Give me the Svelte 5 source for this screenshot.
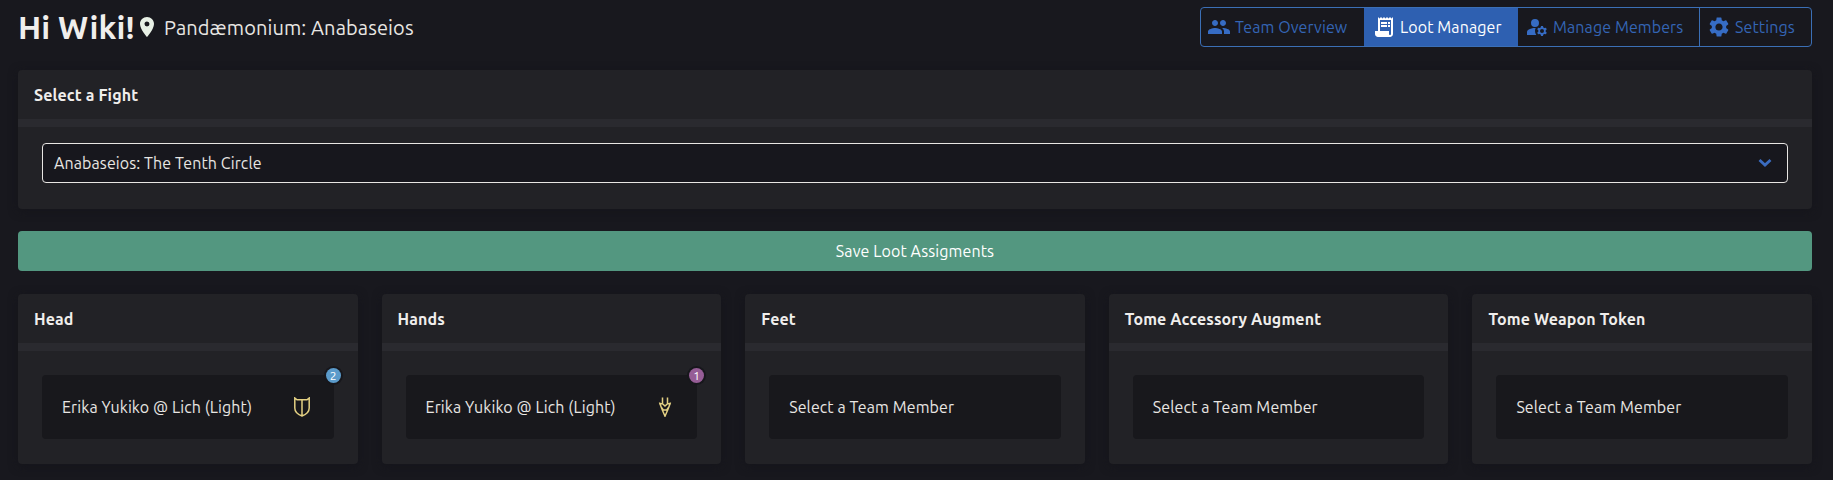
<script>
  const tabs = [
    { label: 'Team Overview', icon: 'group', cls: 'overview' },
    { label: 'Loot Manager', icon: 'receipt', cls: 'loot', active: true },
    { label: 'Manage Members', icon: 'manage', cls: 'members' },
    { label: 'Settings', icon: 'settings', cls: 'settings' }
  ];

  const paths = {
    group: 'M16 11c1.66 0 2.99-1.34 2.99-3S17.66 5 16 5s-3 1.34-3 3 1.34 3 3 3zm-8 0c1.66 0 2.99-1.34 2.99-3S9.66 5 8 5 5 6.34 5 8s1.34 3 3 3zm0 2c-2.33 0-7 1.17-7 3.5V19h14v-2.5c0-2.33-4.67-3.5-7-3.5zm8 0c-.29 0-.62.02-.97.05 1.16.84 1.97 1.97 1.97 3.45V19h6v-2.5c0-2.33-4.67-3.5-7-3.5z',
    receipt: 'M19.5 3.5L18 2l-1.5 1.5L15 2l-1.5 1.5L12 2l-1.500 1.500L9 2 7.500 3.500 6 2v14H3v3c0 1.660 1.340 3 3 3h12c1.660 0 3-1.340 3-3V2l-1.500 1.500zM19 19c0 .55-.45 1-1 1s-1-.45-1-1v-3H8V5h11v14zM9 7h6v2H9zm7 0h2v2h-2zM9 10h6v2H9zm7 0h2v2h-2z',
    manage: 'M10 4a4 4 0 1 0 0 8 4 4 0 0 0 0-8zM10.670 13.020C10.450 13.010 10.230 13 10 13c-2.420 0-4.680.67-6.610 1.820C2.510 15.340 2 16.320 2 17.350V20h9.260A6.960 6.960 0 0 1 10 16c0-1.070.25-2.070.67-2.980zM20.750 16c0-.22-.03-.42-.06-.63l1.140-1.010-1-1.730-1.450.49c-.32-.27-.68-.48-1.080-.63L18 11h-2l-.3 1.490c-.4.15-.76.36-1.080.63l-1.450-.49-1 1.730 1.140 1.010c-.03.21-.06.41-.06.63s.03.42.06.63l-1.140 1.010 1 1.730 1.450-.49c.32.27.68.48 1.080.63L16 21h2l.3-1.490c.4-.15.76-.36 1.080-.63l1.450.49 1-1.730-1.140-1.010c.03-.21.06-.41.06-.63zM17 18a2 2 0 1 1 0-4 2 2 0 0 1 0 4z',
    settings: 'M19.140 12.940c.04-.3.06-.61.06-.94 0-.32-.02-.64-.07-.94l2.030-1.580a.49.49 0 0 0 .12-.61l-1.920-3.320a.488.488 0 0 0-.59-.22l-2.390.96c-.5-.38-1.030-.7-1.620-.94l-.36-2.540a.484.484 0 0 0-.48-.41h-3.840c-.24 0-.43.17-.47.41l-.36 2.540c-.59.24-1.130.57-1.620.94l-2.390-.96c-.22-.08-.47 0-.59.22L2.740 8.870c-.12.21-.08.47.12.61l2.030 1.580c-.05.3-.09.63-.09.94s.02.64.07.94l-2.030 1.580a.49.49 0 0 0-.12.61l1.920 3.320c.12.22.37.29.59.22l2.390-.96c.5.38 1.030.7 1.620.94l.36 2.540c.05.24.24.41.48.41h3.840c.24 0 .44-.17.47-.41l.36-2.540c.59-.24 1.130-.56 1.620-.94l2.390.96c.22.08.47 0 .59-.22l1.920-3.320c.12-.22.07-.47-.12-.61l-2.010-1.580zM12 15.600A3.610 3.610 0 0 1 8.400 12c0-1.980 1.620-3.600 3.600-3.600s3.600 1.620 3.600 3.600-1.620 3.600-3.600 3.600z'
  };

  const slots = [
    { name: 'Head', member: 'Erika Yukiko @ Lich (Light)', job: 'tank', count: 2, tone: 'blue' },
    { name: 'Hands', member: 'Erika Yukiko @ Lich (Light)', job: 'reaper', count: 1, tone: 'purple' },
    { name: 'Feet' },
    { name: 'Tome Accessory Augment' },
    { name: 'Tome Weapon Token' }
  ];
</script>

<main>
  <header class="top">
    <h1>Hi Wiki!</h1>
    <svg class="pin" viewBox="5 2 14 20"><path d="M12 2C8.130 2 5 5.130 5 9c0 5.250 7 13 7 13s7-7.750 7-13c0-3.870-3.130-7-7-7zm0 9.500a2.500 2.500 0 0 1 0-5 2.500 2.500 0 0 1 0 5z" /></svg>
    <span class="tier">Pandæmonium: Anabaseios</span>
    <nav>
      {#each tabs as tab}
        <button class="tab {tab.cls}" class:active={tab.active}>
          <svg viewBox="0 0 24 24"><path fill-rule="evenodd" d={paths[tab.icon]} /></svg>
          <span>{tab.label}</span>
        </button>
      {/each}
    </nav>
  </header>

  <section class="card fight">
    <h2><span>Select a Fight</span></h2>
    <div class="body">
      <div class="select">
        <span>Anabaseios: The Tenth Circle</span>
        <svg viewBox="0 0 14 10"><path d="M1.500 2l5.500 5L12.500 2" /></svg>
      </div>
    </div>
  </section>

  <button class="save"><span>Save Loot Assigments</span></button>

  <div class="grid">
    {#each slots as slot}
      <section class="card">
        <h2><span>{slot.name}</span></h2>
        <div class="body">
          <div class="slot">
            {#if slot.member}
              <span class="member">{slot.member}</span>
              {#if slot.job === 'tank'}
                <svg class="job" viewBox="0 0 20 20"><path d="M2.800 1v10c0 4 3.200 6.500 7.200 8 4-1.500 7.200-4 7.200-8V1L15 2.800H5zM10 2.800V19" /></svg>
              {:else}
                <svg class="job" viewBox="0 0 20 20"><path d="M7.500 0.500V7M12.500 0.500V7M4.500 5.500l2.200 6L10 19.200l3.300-7.700 2.200-6M4.200 6.800h3.300L10 9l2.500-2.200h3.300M6.500 10.500l1.800 2.500h3.400l1.800-2.500" /></svg>
              {/if}
              <span class="badge {slot.tone}">{slot.count}</span>
            {:else}
              <span class="empty">Select a Team Member</span>
            {/if}
          </div>
        </div>
      </section>
    {/each}
  </div>
</main>

<style>
  :global(body) {
    background: #18181e;
  }
  main {
    box-sizing: border-box;
    width: 1833px;
    height: 480px;
    overflow: hidden;
    padding: 7px 21px 0 18px;
    background: #18181e;
    color: #e8e6e3;
    font: 16px/24px Ubuntu, "Noto Sans", sans-serif;
    letter-spacing: 0.1px;
    white-space: nowrap;
  }
  .top {
    display: flex;
    align-items: center;
    height: 40px;
  }
  h1 {
    margin: 0;
    width: 122px;
    color: #f0eeec;
    font-size: 32px;
    line-height: 38px;
    font-weight: 700;
    letter-spacing: 0.1px;
  }
  .pin {
    width: 14px;
    height: 20px;
    fill: #e8f0e6;
  }
  .tier {
    margin-left: 10px;
    font-size: 20px;
    letter-spacing: 0.1px;
    position: relative;
    top: 1px;
  }
  nav {
    display: flex;
    margin-left: auto;
    box-sizing: border-box;
    width: 612px;
    height: 40px;
    border: 1px solid #3b6fb6;
    border-radius: 4px;
    overflow: hidden;
  }
  .tab {
    display: flex;
    align-items: center;
    box-sizing: border-box;
    padding: 0 0 0 7px;
    border: 0;
    border-right: 1px solid #3b6fb6;
    background: none;
    color: #3465b5;
    font: inherit;
    letter-spacing: inherit;
  }
  .tab svg {
    width: 24px;
    height: 24px;
    margin-right: 4px;
    fill: #366cc4;
  }
  .overview { width: 163px; padding-left: 6px; border-right: 0; }
  .loot { width: 154px; padding-left: 8px; }
  .members { width: 182px; }
  .settings { width: 111px; border-right: 0; }
  .tab.active {
    background: #2e60b1;
    border-color: #2e60b1;
    color: #fff;
  }
  .tab.active svg {
    fill: #fff;
  }
  .card {
    border-radius: 4px;
    background: #222226;
    box-shadow: 0 2px 10px rgba(20, 20, 26, 0.8);
  }
  .fight {
    height: 139px;
    margin-top: 23px;
  }
  h2 {
    box-sizing: border-box;
    margin: 0;
    height: 57px;
    padding: 13px 16px 0;
    border-bottom: 8px solid #2a2a2f;
    color: #f0eeec;
    font-size: 16px;
    line-height: 24px;
    font-weight: 700;
    letter-spacing: 0.12px;
  }
  .body {
    padding: 16px 24px 0;
  }
  .select {
    display: flex;
    align-items: center;
    justify-content: space-between;
    box-sizing: border-box;
    height: 40px;
    padding: 0 15px 0 11px;
    border: 1px solid #e8e6e3;
    border-radius: 4px;
    background: #17171d;
  }
  .select svg {
    width: 14px;
    height: 10px;
    fill: none;
    stroke: #3b6cc0;
    stroke-width: 2.8;
  }
  .save {
    display: block;
    width: 100%;
    height: 40px;
    margin: 22px 0 23px;
    padding: 0;
    border: 0;
    border-radius: 4px;
    background: #539780;
    color: #fff;
    font: inherit;
    letter-spacing: inherit;
  }
  .grid {
    display: grid;
    grid-template-columns: repeat(5, 1fr);
    gap: 24px;
  }
  .grid .card {
    height: 170px;
  }
  .grid .body {
    padding-top: 24px;
  }
  .slot {
    position: relative;
    display: flex;
    align-items: center;
    justify-content: space-between;
    box-sizing: border-box;
    height: 64px;
    padding: 0 22px 0 20px;
    border-radius: 4px;
    background: #18181c;
  }
  .job {
    width: 20px;
    height: 20px;
    fill: none;
    stroke: #e3d083;
    stroke-width: 1.5;
  }
  .badge {
    position: absolute;
    top: -7px;
    right: -7px;
    width: 15px;
    height: 15px;
    border-radius: 50%;
    color: #fff;
    font-size: 12px;
    line-height: 15px;
    letter-spacing: 0;
    text-align: center;
    box-shadow: 0 0 0 2px #17171c;
  }
  .blue { background: #5b9bcb; }
  .purple { background: #965d96; }
</style>
